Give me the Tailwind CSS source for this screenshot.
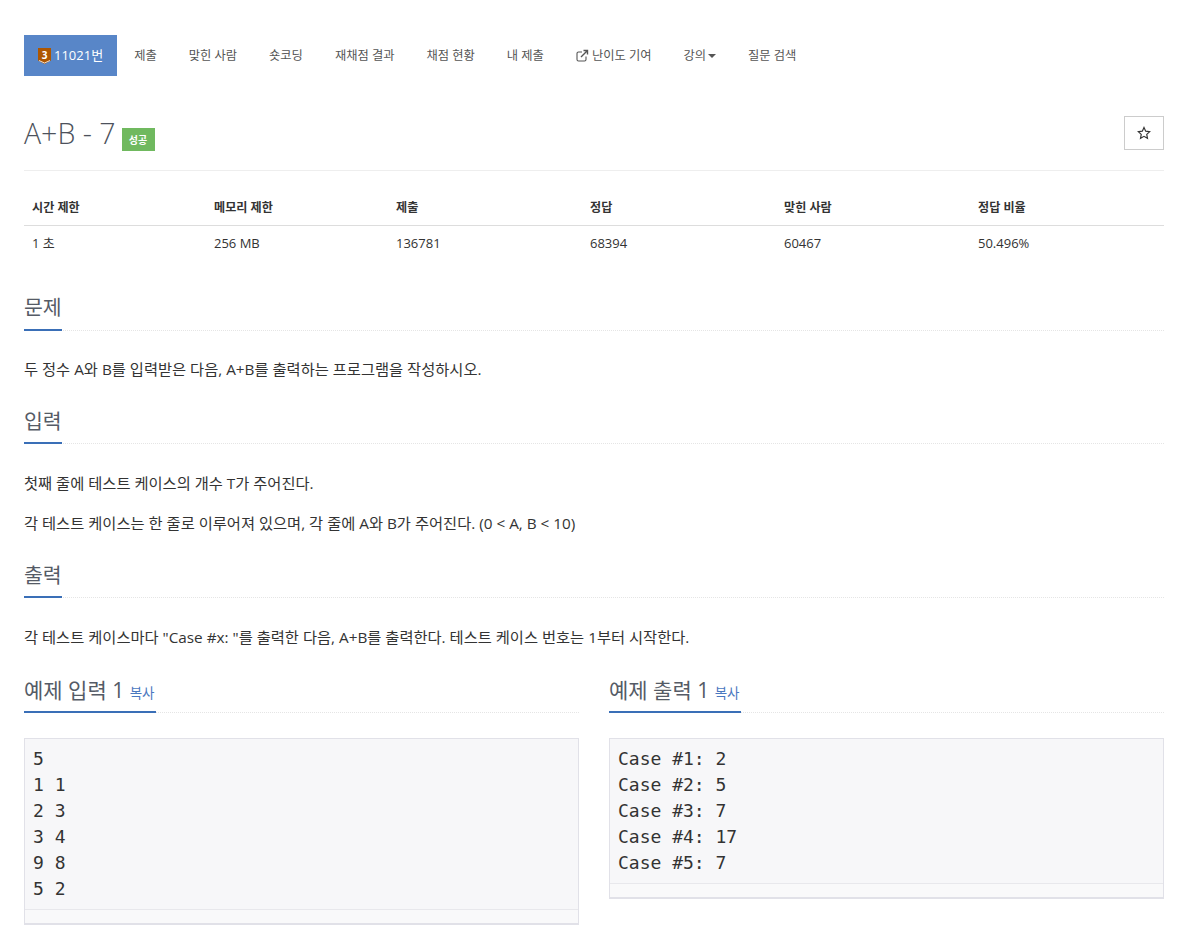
<!DOCTYPE html>
<html lang="ko">
<head>
    <meta charset="UTF-8">
    <title>11021번: A+B - 7</title>
    <script src="https://cdn.jsdelivr.net/npm/@tailwindcss/browser@4"></script>
</head>
<body class="bg-white font-['Open_Sans','Noto_Sans_CJK_KR',sans-serif] text-[#333]">
<div class="w-[1196px] h-[942px] overflow-hidden pl-6 pr-8 pt-[35px]">

    <!-- tabs -->
    <nav class="flex h-[41px] text-[12.280px] text-[#555] items-center">
        <a class="flex items-center h-[41px] pl-[14px] pr-[14px] bg-[#5886c8] text-white text-[13px]">
            <svg class="w-[13px] h-[16px] mr-[3px]" viewBox="0 0 13 16"><path d="M0 0h13v12.500L6.500 16 0 12.500z" fill="#ad5600"/><path d="M1 12.500l5.500 2.500 5.500-2.500" fill="none" stroke="#fff" stroke-width=".8"/><text x="6.500" y="10.500" text-anchor="middle" font-size="10" font-weight="700" fill="#fff">3</text></svg>
            11021번
        </a>
        <a class="pl-[17px] pr-[16px] pt-[1px]">제출</a>
        <a class="px-[16px] pt-[1px]">맞힌 사람</a>
        <a class="px-[16px] pt-[1px]">숏코딩</a>
        <a class="px-[16px] pt-[1px]">재채점 결과</a>
        <a class="px-[16px] pt-[1px]">채점 현황</a>
        <a class="px-[16px] pt-[1px]">내 제출</a>
        <a class="flex items-center px-[16px] pt-[1px]">
            <svg class="w-[13px] h-[13px] mr-[3px] mt-[-1px]" viewBox="0 0 13 13" fill="none" stroke="#555" stroke-width="1.100"><path d="M10 7.500v3a1.500 1.500 0 0 1-1.500 1.500h-6A1.500 1.500 0 0 1 1 10.500v-6A1.500 1.500 0 0 1 2.500 3H6"/><path d="M5 8l6-6M7.500 1.500h4v4" stroke-width="1.400"/></svg>
            난이도 기여
        </a>
        <a class="flex items-center px-[16px] pt-[1px]">강의<span class="ml-[2px] w-0 h-0 border-x-4 border-x-transparent border-t-4 border-t-[#555]"></span></a>
        <a class="px-[16px] pt-[1px]">질문 검색</a>
    </nav>

    <!-- title -->
    <div class="flex justify-between h-[58px] mt-[36px] border-b border-[#eee] box-content">
        <h1 class="flex items-start text-[#4d525c] font-light text-[28.500px] leading-[40px] mt-[1px]">
            A+B - 7
            <span class="ml-[6px] mt-[15px] w-[33px] h-[23px] bg-[#70b95f] text-white text-[10px] font-bold flex items-center justify-center">성공</span>
        </h1>
        <button class="w-[40px] h-[34px] border border-[#ccc] flex items-center justify-center mt-[4px]">
            <svg class="w-[14px] h-[14px]" viewBox="0 0 24 24" fill="none" stroke="#333" stroke-width="2"><path d="M12 2.500l2.900 6.300 6.800.8-5 4.700 1.300 6.800-6-3.400-6 3.400 1.300-6.800-5-4.700 6.800-.8z"/></svg>
        </button>
    </div>

    <!-- stats -->
    <div class="grid grid-cols-[182px_182px_194px_194px_194px_194px] text-[12.100px] mt-[19px]">
        <div class="h-[36px] px-2 pt-[2px] flex items-center font-bold border-b border-[#ddd]">시간 제한</div>
        <div class="h-[36px] px-2 pt-[2px] flex items-center font-bold border-b border-[#ddd]">메모리 제한</div>
        <div class="h-[36px] px-2 pt-[2px] flex items-center font-bold border-b border-[#ddd]">제출</div>
        <div class="h-[36px] px-2 pt-[2px] flex items-center font-bold border-b border-[#ddd]">정답</div>
        <div class="h-[36px] px-2 pt-[2px] flex items-center font-bold border-b border-[#ddd]">맞힌 사람</div>
        <div class="h-[36px] px-2 pt-[2px] flex items-center font-bold border-b border-[#ddd]">정답 비율</div>
        <div class="h-[36px] px-2 flex items-center text-[13px]">1 초</div>
        <div class="h-[36px] px-2 flex items-center text-[13px]">256 MB</div>
        <div class="h-[36px] px-2 flex items-center text-[13px]">136781</div>
        <div class="h-[36px] px-2 flex items-center text-[13px]">68394</div>
        <div class="h-[36px] px-2 flex items-center text-[13px]">60467</div>
        <div class="h-[36px] px-2 flex items-center text-[13px]">50.496%</div>
    </div>

    <!-- problem -->
    <section class="mt-[30px]">
        <div class="h-[39px] border-b border-dotted border-[#e5e5e5]">
            <h2 class="inline-block h-[39px] text-[20.500px] leading-[31px] text-[#555b66] border-b-2 border-[#3a6fb7]">문제</h2>
        </div>
        <p class="mt-[26px] text-[15.300px] leading-[24px]">두 정수 A와 B를 입력받은 다음, A+B를 출력하는 프로그램을 작성하시오.</p>
    </section>

    <section class="mt-[24px]">
        <div class="h-[39px] border-b border-dotted border-[#e5e5e5]">
            <h2 class="inline-block h-[39px] text-[20.500px] leading-[33px] text-[#555b66] border-b-2 border-[#3a6fb7]">입력</h2>
        </div>
        <p class="mt-[27px] text-[15.300px] leading-[24px]">첫째 줄에 테스트 케이스의 개수 T가 주어진다.</p>
        <p class="mt-[16px] text-[15.300px] leading-[24px]">각 테스트 케이스는 한 줄로 이루어져 있으며, 각 줄에 A와 B가 주어진다. (0 &lt; A, B &lt; 10)</p>
    </section>

    <section class="mt-[24px]">
        <div class="h-[39px] border-b border-dotted border-[#e5e5e5]">
            <h2 class="inline-block h-[39px] text-[20.500px] leading-[33px] text-[#555b66] border-b-2 border-[#3a6fb7]">출력</h2>
        </div>
        <p class="mt-[27px] text-[15.300px] leading-[24px]">각 테스트 케이스마다 "Case #x: "를 출력한 다음, A+B를 출력한다. 테스트 케이스 번호는 1부터 시작한다.</p>
    </section>

    <!-- samples -->
    <div class="grid grid-cols-[555px_555px] gap-x-[30px] mt-[25px] items-start">
        <div>
            <div class="h-[39px] border-b border-dotted border-[#e5e5e5]">
                <h2 class="inline-block h-[39px] pr-[1px] text-[21px] leading-[33px] text-[#555b66] border-b-2 border-[#3a6fb7]">예제 입력 1 <a class="text-[13.500px] text-[#4a78c0]">복사</a></h2>
            </div>
            <div class="mt-[25px] border border-[#e1e1e8] border-b-2 bg-[#f7f7f9]">
                <pre class="h-[170px] px-2 pt-[7px] font-['DejaVu_Sans_Mono',monospace] text-[18px] leading-[26px] text-[#333]">5
1 1
2 3
3 4
9 8
5 2</pre>
                <div class="h-[14px] bg-[#f9f9fa] border-t border-[#e8e8ec]"></div>
            </div>
        </div>
        <div>
            <div class="h-[39px] border-b border-dotted border-[#e5e5e5]">
                <h2 class="inline-block h-[39px] pr-[1px] text-[21px] leading-[33px] text-[#555b66] border-b-2 border-[#3a6fb7]">예제 출력 1 <a class="text-[13.500px] text-[#4a78c0]">복사</a></h2>
            </div>
            <div class="mt-[25px] border border-[#e1e1e8] border-b-2 bg-[#f7f7f9]">
                <pre class="h-[144px] px-2 pt-[7px] font-['DejaVu_Sans_Mono',monospace] text-[18px] leading-[26px] text-[#333]">Case #1: 2
Case #2: 5
Case #3: 7
Case #4: 17
Case #5: 7</pre>
                <div class="h-[14px] bg-[#f9f9fa] border-t border-[#e8e8ec]"></div>
            </div>
        </div>
    </div>
</div>
</body>
</html>
